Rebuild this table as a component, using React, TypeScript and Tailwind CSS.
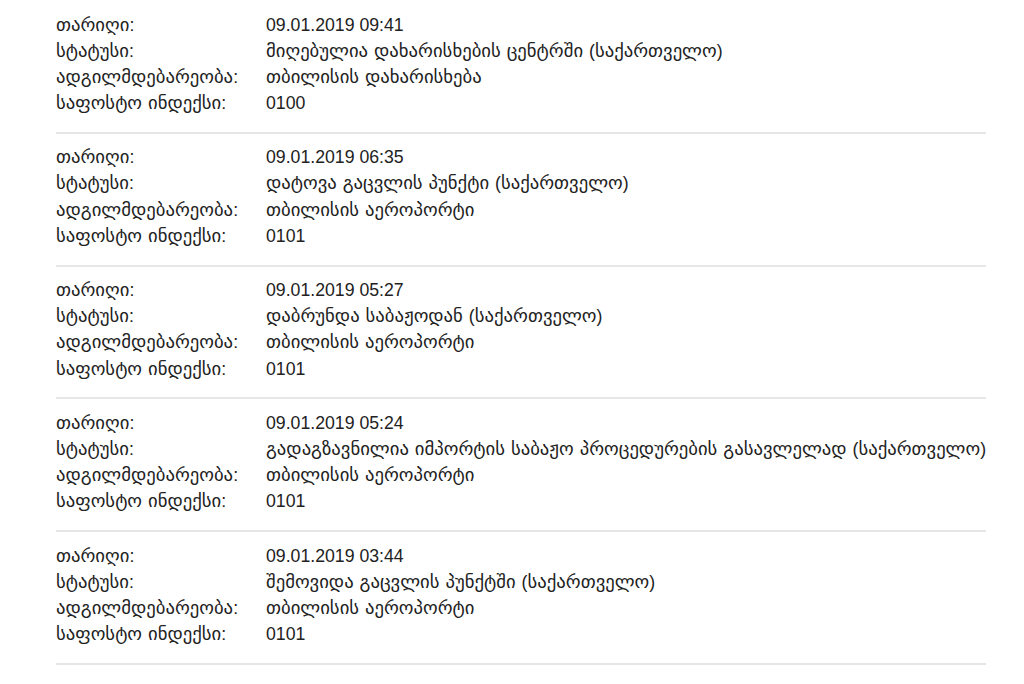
import React from "react";

const items = [
  { date: "09.01.2019 09:41", status: "მიღებულია დახარისხების ცენტრში (საქართველო)", place: "თბილისის დახარისხება", zip: "0100" },
  { date: "09.01.2019 06:35", status: "დატოვა გაცვლის პუნქტი (საქართველო)", place: "თბილისის აეროპორტი", zip: "0101" },
  { date: "09.01.2019 05:27", status: "დაბრუნდა საბაჟოდან (საქართველო)", place: "თბილისის აეროპორტი", zip: "0101" },
  { date: "09.01.2019 05:24", status: "გადაგზავნილია იმპორტის საბაჟო პროცედურების გასავლელად (საქართველო)", place: "თბილისის აეროპორტი", zip: "0101" },
  { date: "09.01.2019 03:44", status: "შემოვიდა გაცვლის პუნქტში (საქართველო)", place: "თბილისის აეროპორტი", zip: "0101" },
];

function Txt({ s }: { s: string }) {
  const parts = s.split(/([\u10A0-\u10FF][\u10A0-\u10FF ]*)/);
  return (
    <>
      {parts.map((p, i) =>
        /[\u10A0-\u10FF]/.test(p) ? (
          <span key={i} className="text-[18.7px]" style={{ fontFamily: '"DejaVu Sans", sans-serif' }}>
            {p}
          </span>
        ) : (
          <span key={i}>{p}</span>
        )
      )}
    </>
  );
}

export default function App() {
  return (
    <div
      className="min-h-[684px] w-[1024px] bg-white pt-[1px] text-[#222] text-[17.7px]"
      style={{ fontFamily: '"Liberation Sans", "DejaVu Sans", Arial, sans-serif' }}
    >
      <div className="ml-[56px] w-[930px]">
        {items.map((it, i) => (
          <div key={i} className="pt-[10.5px] pb-[15.5px] border-b-2 border-[#e6e6e6]">
            {[
              ["თარიღი:", it.date],
              ["სტატუსი:", it.status],
              ["ადგილმდებარეობა:", it.place],
              ["საფოსტო ინდექსი:", it.zip],
            ].map(([k, v], j) => (
              <div key={j} className="flex h-[26.2px] items-center leading-[26.2px] whitespace-nowrap">
                <div className="w-[210px] shrink-0">
                  <Txt s={k} />
                </div>
                <div>
                  <Txt s={v} />
                </div>
              </div>
            ))}
          </div>
        ))}
      </div>
    </div>
  );
}
